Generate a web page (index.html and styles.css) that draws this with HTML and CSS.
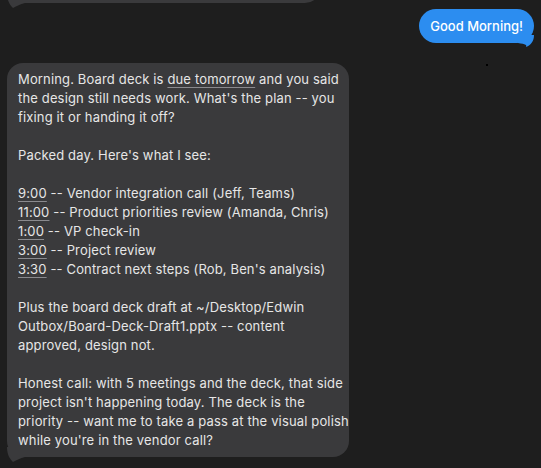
FILE: index.html
```html
<!DOCTYPE html>
<html lang="en">
<head>
<meta charset="utf-8">
<title>Chat</title>
<link rel="stylesheet" href="styles.css">
</head>
<body>
<div class="thread">
  <div class="row row-left row-prev">
    <div class="bubble bubble-gray bubble-prev">
      <svg class="tail tail-left" viewBox="0 0 20 16" width="20" height="16"><path d="M0 0 C0 8 3 12 6 15 C10 13 13 11 18 10 L18 0 Z"/></svg>
    </div>
  </div>
  <div class="row row-right">
    <div class="bubble bubble-blue">Good Morning!
      <svg class="tail tail-right" viewBox="0 0 16 12" width="16" height="12"><path d="M16 0 C16 6 13 10 8 12 C9 10 8 9 0 8 L0 0 Z"/></svg>
    </div>
    <span class="dot"></span>
  </div>
  <div class="row row-left">
    <div class="bubble bubble-gray msg">
      <p>Morning. Board deck is <span class="link">due tomorrow</span> and you said<br>
      the design still needs work. What's the plan -- you<br>
      fixing it or handing it off?</p>
      <p>Packed day. Here's what I see:</p>
      <p><span class="link">9:00</span> -- Vendor integration call (Jeff, Teams)<br>
      <span class="link">11:00</span> -- Product priorities review (Amanda, Chris)<br>
      <span class="link">1:00</span> -- VP check-in<br>
      <span class="link">3:00</span> -- Project review<br>
      <span class="link">3:30</span> -- Contract next steps (Rob, Ben's analysis)</p>
      <p>Plus the board deck draft at ~/Desktop/Edwin<br>
      Outbox/Board-Deck-Draft1.pptx -- content<br>
      approved, design not.</p>
      <p>Honest call: with 5 meetings and the deck, that side<br>
      project isn't happening today. The deck is the<br>
      priority -- want me to take a pass at the visual polish<br>
      while you're in the vendor call?</p>
      <svg class="tail tail-left" viewBox="0 0 20 16" width="20" height="16"><path d="M0 0 C0 8 3 12 6 15 C10 13 13 11 18 10 L18 0 Z"/></svg>
    </div>
  </div>
</div>
</body>
</html>
```
FILE: styles.css
```css
html, body {
  margin: 0;
  padding: 0;
  background: #1e1e1e;
  height: 100%;
  overflow: hidden;
}

.thread {
  display: flex;
  flex-direction: column;
  padding: 0 7px;
  font-family: "Inter", "Noto Sans", sans-serif;
}

.row {
  display: flex;
  position: relative;
}

.row-left {
  justify-content: flex-start;
}

.row-right {
  justify-content: flex-end;
  margin-top: 6px;
}

.row-prev {
  margin-top: -37px;
}

.bubble {
  position: relative;
}

.bubble-gray {
  background: #3a3a3c;
  border-radius: 16px;
  color: #e6e6e6;
}

.bubble-gray .tail {
  fill: #3a3a3c;
}

.bubble-prev {
  width: 314px;
  height: 40px;
}

.bubble-blue {
  background: #2c8df0;
  color: #ffffff;
  border-radius: 17px;
  font-size: 13px;
  font-weight: 500;
  line-height: 18px;
  padding: 8px 11px 8px 11px;
}

.bubble-blue .tail {
  fill: #2c8df0;
}

.tail {
  position: absolute;
  display: block;
}

.tail-left {
  left: 0;
  bottom: -6px;
}

.tail-right {
  right: 0;
  bottom: -4px;
}

.dot {
  position: absolute;
  left: 479px;
  top: 55px;
  width: 2px;
  height: 2px;
  background: #000;
}

.msg {
  margin-top: 20px;
  width: 320px;
  padding: 7px 11px 7px 11px;
  font-size: 13px;
  letter-spacing: 0.15px;
  line-height: 19px;
  white-space: nowrap;
}

.msg p {
  margin: 0 0 19px 0;
}

.msg p:last-of-type {
  margin-bottom: 0;
}

.link {
  text-decoration: underline;
  text-decoration-color: #8a8a8e;
  text-decoration-thickness: 1px;
  text-underline-offset: 3px;
}
```
